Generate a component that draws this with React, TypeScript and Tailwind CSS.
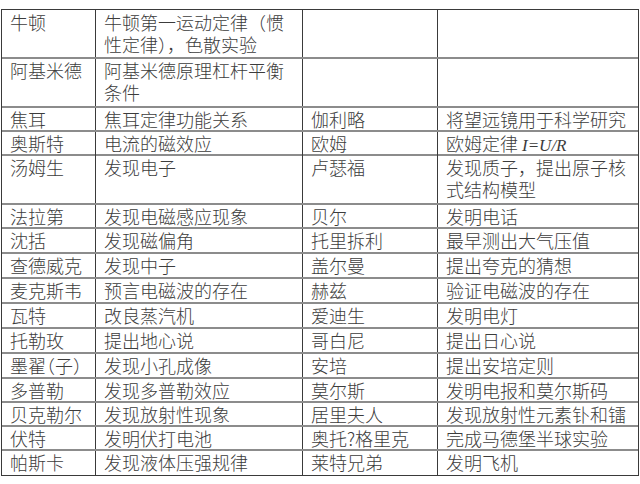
import React from "react";

type Row = { c: React.ReactNode[]; h: string; first?: boolean };

const rows: Row[] = [
  { c: ["牛顿", "牛顿第一运动定律（惯性定律），色散实验", "", ""], h: "h-[47px]", first: true },
  { c: ["阿基米德", "阿基米德原理杠杆平衡条件", "", ""], h: "h-[49px]" },
  { c: ["焦耳", "焦耳定律功能关系", "伽利略", "将望远镜用于科学研究"], h: "h-[24px]" },
  {
    c: [
      "奥斯特",
      "电流的磁效应",
      "欧姆",
      <span key="o">
        欧姆定律{" "}
        <span className="italic text-[17px] [font-family:'Liberation_Serif',serif]">I=U/R</span>
      </span>,
    ],
    h: "h-[24px]",
  },
  { c: ["汤姆生", "发现电子", "卢瑟福", "发现质子，提出原子核式结构模型"], h: "h-[49px]" },
  { c: ["法拉第", "发现电磁感应现象", "贝尔", "发明电话"], h: "h-[24px]" },
  { c: ["沈括", "发现磁偏角", "托里拆利", "最早测出大气压值"], h: "h-[25px]" },
  { c: ["查德威克", "发现中子", "盖尔曼", "提出夸克的猜想"], h: "h-[25px]" },
  { c: ["麦克斯韦", "预言电磁波的存在", "赫兹", "验证电磁波的存在"], h: "h-[25px]" },
  { c: ["瓦特", "改良蒸汽机", "爱迪生", "发明电灯"], h: "h-[25px]" },
  { c: ["托勒玫", "提出地心说", "哥白尼", "提出日心说"], h: "h-[25px]" },
  {
    c: [
      <span key="m" className="[font-feature-settings:'halt']">墨翟（子）</span>,
      "发现小孔成像",
      "安培",
      "提出安培定则",
    ],
    h: "h-[25px]",
  },
  { c: ["多普勒", "发现多普勒效应", "莫尔斯", "发明电报和莫尔斯码"], h: "h-[24px]" },
  { c: ["贝克勒尔", "发现放射性现象", "居里夫人", "发现放射性元素钋和镭"], h: "h-[24px]" },
  { c: ["伏特", "发明伏打电池", "奥托?格里克", "完成马德堡半球实验"], h: "h-[24px]" },
  { c: ["帕斯卡", "发现液体压强规律", "莱特兄弟", "发明飞机"], h: "h-[26px]" },
];

export default function App() {
  return (
    <div className="w-[640px] h-[484px] bg-white overflow-hidden pt-[9px] pl-[1px]">
      <div
        className="w-[638px] border border-[#3a3a3a] text-[18px] leading-[22px] text-[#3c3c3c] [font-family:'Noto_Sans_CJK_SC','Noto_Sans_CJK_JP',sans-serif] font-light"
      >
        {rows.map((r, i) => (
          <div
            key={i}
            className={`grid grid-cols-[93px_207px_135px_201px] ${r.h} ${
              r.first ? "" : "border-t-2 border-[#8c8c8c]"
            }`}
          >
            {r.c.map((cell, j) => (
              <div
                key={j}
                className={`pl-2 ${j === 0 ? "pr-0 whitespace-nowrap" : "border-l border-[#3a3a3a] pr-2"} ${
                  r.h === "h-[47px]" ? "pt-px" : ""
                }`}
              >
                {cell}
              </div>
            ))}
          </div>
        ))}
      </div>
    </div>
  );
}
